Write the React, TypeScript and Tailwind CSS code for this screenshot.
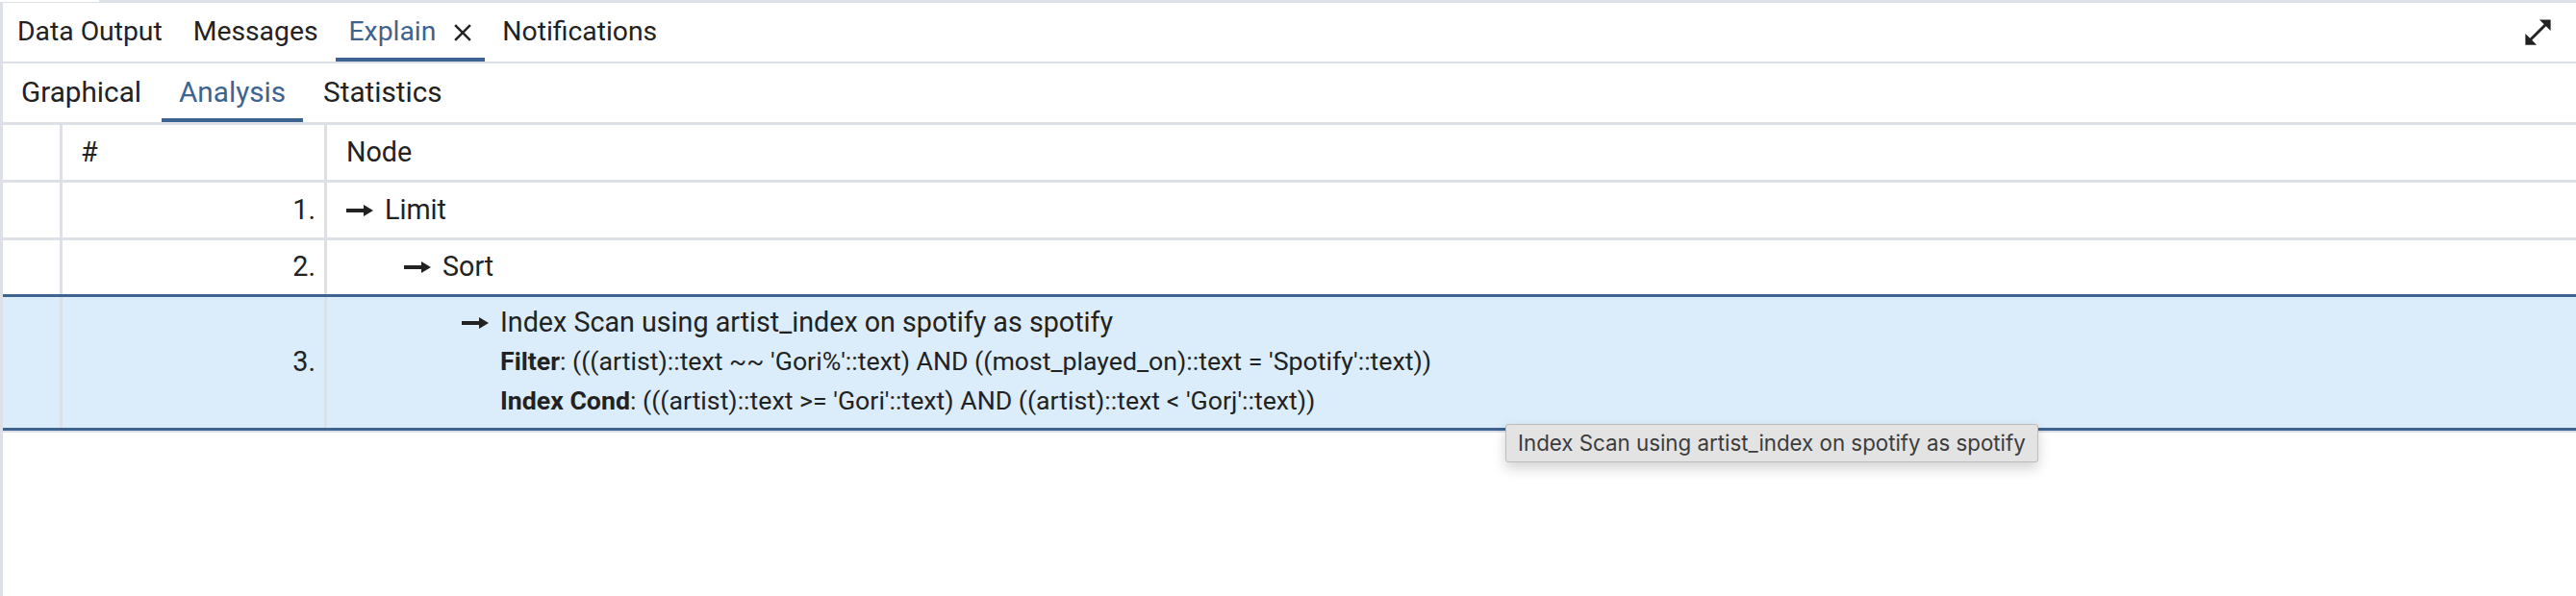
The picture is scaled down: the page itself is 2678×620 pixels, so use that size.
const GRAY = 'border-[#dde0e6]';

function ArrowRight() {
  return (
    <svg width="28" height="12" viewBox="0 0 28 12" className="shrink-0">
      <rect x="0" y="4" width="20" height="4" fill="#222222" />
      <path d="M18 0 L28 6 L18 12 Z" fill="#222222" />
    </svg>
  );
}

function CloseIcon() {
  return (
    <svg width="30" height="30" viewBox="0 0 24 24" fill="#222222">
      <path d="M19 6.41 17.59 5 12 10.59 6.41 5 5 6.41 10.59 12 5 17.59 6.41 19 12 13.41 17.59 19 19 17.59 13.41 12z" />
    </svg>
  );
}

function ExpandIcon() {
  return (
    <svg width="35" height="35" viewBox="0 0 24 24" fill="#222222">
      <path d="M21 11V3h-8l3.29 3.29-10 10L3 13v8h8l-3.29-3.29 10-10z" />
    </svg>
  );
}

function Tab({ label, active, close }: { label: string; active?: boolean; close?: boolean }) {
  return (
    <div className={`relative h-full flex items-center pl-[14px] ${close ? 'pr-[8px]' : 'pr-[14px]'}`}>
      <span className={active ? 'text-[#3d6491]' : 'text-[#222222]'}>{label}</span>
      {close && (
        <span className="ml-[13px] flex items-center">
          <CloseIcon />
        </span>
      )}
      {active && <div className="absolute left-0 right-0 bottom-0 h-[4px] bg-[#3d6491]" />}
    </div>
  );
}

function SubTab({ label, active }: { label: string; active?: boolean }) {
  return (
    <div className="relative h-full flex items-center px-[18px]">
      <span className={active ? 'text-[#3d6491]' : 'text-[#222222]'}>{label}</span>
      {active && <div className="absolute left-0 right-0 bottom-0 h-[4px] bg-[#3d6491]" />}
    </div>
  );
}

const rows = [
  { n: '1.', indent: 'pl-[20px]', label: 'Limit' },
  { n: '2.', indent: 'pl-[80px]', label: 'Sort' },
];

export default function App() {
  return (
    <div className="w-[2678px] h-[620px] bg-white overflow-hidden relative font-['Roboto',sans-serif] text-[28.7px] text-[#222222]">
      {/* strip left over from the editor above */}
      <div className="h-[3px] bg-[#dde0e6] flex">
        <div className="w-[103px] h-[2px] bg-white" />
      </div>

      <div className={`border-l-[3px] ${GRAY} h-[617px] flex flex-col`}>
        {/* main tabs */}
        <div className={`h-[63px] border-b-[2px] ${GRAY} flex items-stretch`}>
          <div className="flex gap-[4px] pl-[1px] text-[28.3px]">
            <Tab label="Data Output" />
            <Tab label="Messages" />
            <Tab label="Explain" active close />
            <Tab label="Notifications" />
          </div>
          <div className="ml-auto mr-[22px] flex items-center">
            <ExpandIcon />
          </div>
        </div>

        {/* explain sub tabs */}
        <div className={`h-[64px] border-b-[3px] ${GRAY} flex gap-[3px] pl-[1px] text-[29.7px]`}>
          <SubTab label="Graphical" />
          <SubTab label="Analysis" active />
          <SubTab label="Statistics" />
        </div>

        {/* analysis grid */}
        <div className="flex flex-col">
          <div className={`flex h-[60px] border-b-[3px] ${GRAY}`}>
            <div className={`w-[62px] border-r-[3px] ${GRAY}`} />
            <div className={`w-[275px] border-r-[3px] ${GRAY} flex items-center pl-[19px]`}>#</div>
            <div className="flex-1 flex items-center pl-[20px]">Node</div>
          </div>

          {rows.map((r, i) => (
            <div key={r.n} className={`flex ${i === 0 ? `h-[60px] border-b-[3px] ${GRAY}` : 'h-[56px]'}`}>
              <div className={`w-[62px] border-r-[3px] ${GRAY}`} />
              <div className={`w-[275px] border-r-[3px] ${GRAY} flex items-center justify-end pr-[9px]`}>{r.n}</div>
              <div className={`flex-1 flex items-center gap-[12px] ${r.indent}`}>
                <ArrowRight />
                <span>{r.label}</span>
              </div>
            </div>
          ))}

          <div className="border-y-[3px] border-[#3d6491] bg-[#dbedfb] flex">
            <div className={`w-[62px] border-r-[3px] ${GRAY}`} />
            <div className={`w-[275px] border-r-[3px] ${GRAY} flex items-center justify-end pr-[9px]`}>3.</div>
            <div className="flex-1 pl-[140px] pt-[6px] pb-[7px] leading-[41px]">
              <div className="flex items-center gap-[12px]">
                <ArrowRight />
                <span>Index Scan using artist_index on spotify as spotify</span>
              </div>
              <div className="pl-[40px] text-[26.7px]">
                <span className="font-bold">Filter</span>: (((artist)::text ~~ 'Gori%'::text) AND ((most_played_on)::text = 'Spotify'::text))
              </div>
              <div className="pl-[40px] text-[26.7px]">
                <span className="font-bold">Index Cond</span>: (((artist)::text &gt;= 'Gori'::text) AND ((artist)::text &lt; 'Gorj'::text))
              </div>
            </div>
          </div>
          <div className="h-[2px] bg-[#dde0e6]" />
        </div>
      </div>

      {/* hover tooltip */}
      <div className="absolute left-[1565px] top-[441px] h-[40px] px-[12px] flex items-center bg-[#e3e3e3] border border-[#bcbcbc] rounded-[3px] shadow-[0_6px_14px_rgba(0,0,0,0.18)] font-['Inter',sans-serif] text-[22.3px] text-[#3c3c3c] whitespace-nowrap">
        Index Scan using artist_index on spotify as spotify
      </div>
    </div>
  );
}
